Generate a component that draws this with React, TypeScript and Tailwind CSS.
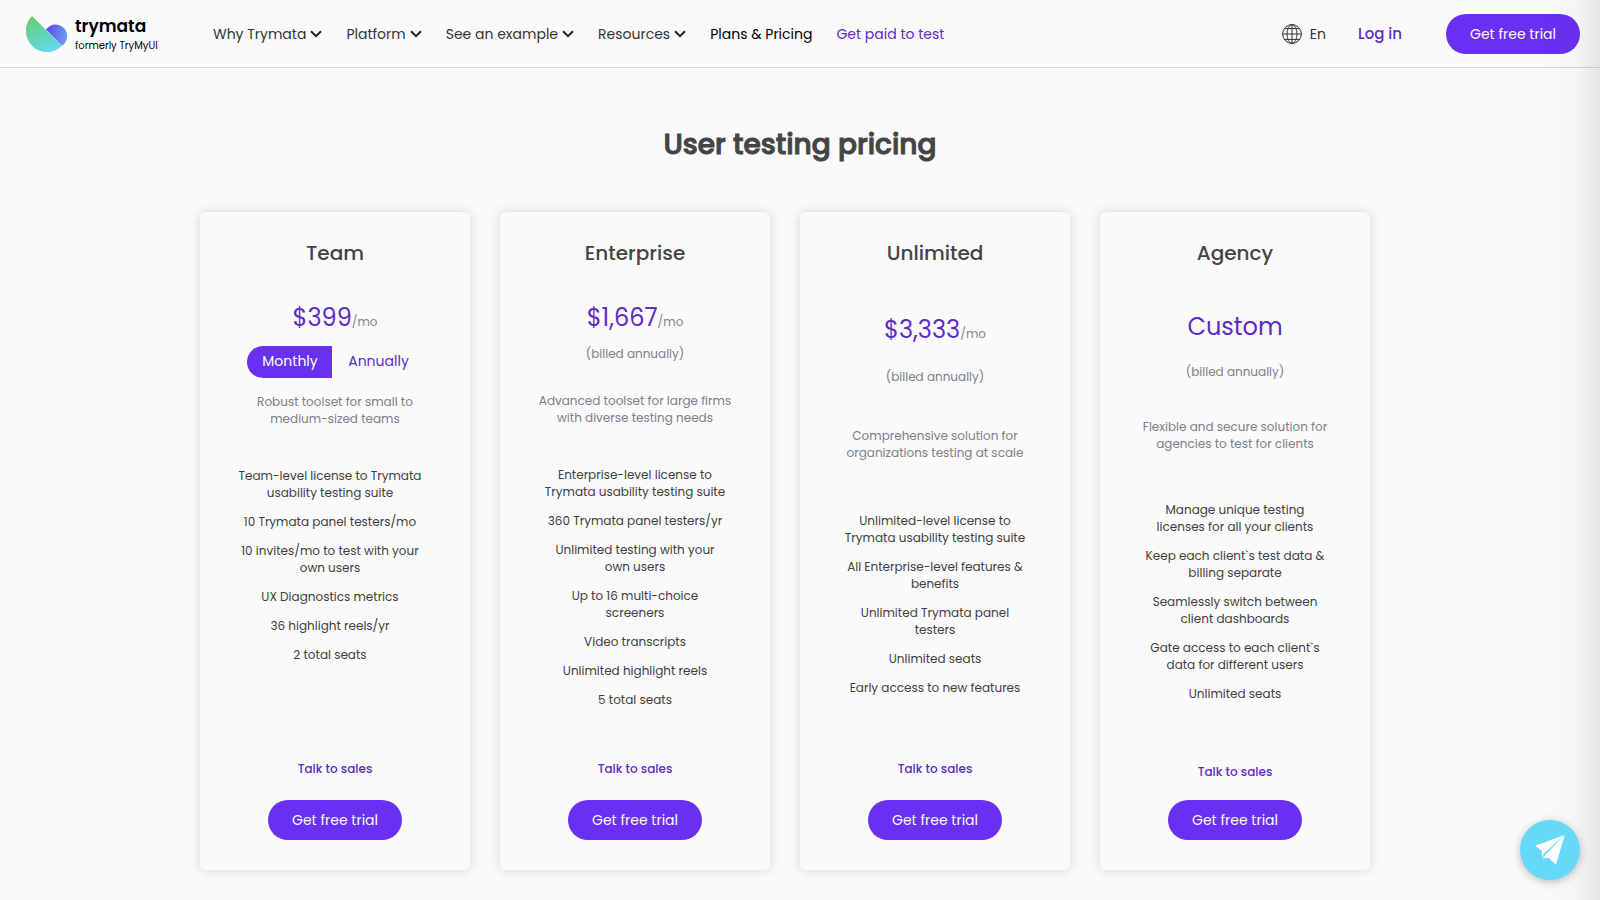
const navItems = [
  { label: "Why Trymata", menu: true, className: "text-[#333]" },
  { label: "Platform", menu: true, className: "text-[#333]" },
  { label: "See an example", menu: true, className: "text-[#333]" },
  { label: "Resources", menu: true, className: "text-[#333]" },
  { label: "Plans & Pricing", menu: false, className: "text-black" },
  { label: "Get paid to test", menu: false, className: "text-[#5f2bc4]" },
];

type Plan = {
  name: string;
  price: string;
  perMonth?: boolean;
  toggle?: boolean;
  summary: string[];
  features: string[][];
};

const plans: Plan[] = [
  {
    name: "Team",
    price: "$399",
    perMonth: true,
    toggle: true,
    summary: ["Robust toolset for small to", "medium-sized teams"],
    features: [
      ["Team-level license to Trymata", "usability testing suite"],
      ["10 Trymata panel testers/mo"],
      ["10 invites/mo to test with your", "own users"],
      ["UX Diagnostics metrics"],
      ["36 highlight reels/yr"],
      ["2 total seats"],
    ],
  },
  {
    name: "Enterprise",
    price: "$1,667",
    perMonth: true,
    summary: ["Advanced toolset for large firms", "with diverse testing needs"],
    features: [
      ["Enterprise-level license to", "Trymata usability testing suite"],
      ["360 Trymata panel testers/yr"],
      ["Unlimited testing with your", "own users"],
      ["Up to 16 multi-choice", "screeners"],
      ["Video transcripts"],
      ["Unlimited highlight reels"],
      ["5 total seats"],
    ],
  },
  {
    name: "Unlimited",
    price: "$3,333",
    perMonth: true,
    summary: ["Comprehensive solution for", "organizations testing at scale"],
    features: [
      ["Unlimited-level license to", "Trymata usability testing suite"],
      ["All Enterprise-level features &", "benefits"],
      ["Unlimited Trymata panel", "testers"],
      ["Unlimited seats"],
      ["Early access to new features"],
    ],
  },
  {
    name: "Agency",
    price: "Custom",
    summary: ["Flexible and secure solution for", "agencies to test for clients"],
    features: [
      ["Manage unique testing", "licenses for all your clients"],
      ["Keep each client`s test data &", "billing separate"],
      ["Seamlessly switch between", "client dashboards"],
      ["Gate access to each client`s", "data for different users"],
      ["Unlimited seats"],
    ],
  },
];

function Lines({ lines }: { lines: string[] }) {
  return (
    <>
      {lines.map((line) => (
        <span key={line} className="block whitespace-nowrap">{line}</span>
      ))}
    </>
  );
}

function TrialButton() {
  return (
    <button type="button" className="h-10 w-[134px] rounded-full bg-[#6a30f2] text-sm whitespace-nowrap text-[#fafafa]">
      Get free trial
    </button>
  );
}

function Logo() {
  return (
    <a href="#" className="flex w-[188px] shrink-0 items-center gap-2 text-black">
      <svg viewBox="0 0 42 38" className="h-[38px] w-[42px] shrink-0 overflow-visible" aria-hidden="true">
        <defs>
          <linearGradient id="leaf" x1="0.2" y1="0" x2="0.6" y2="1">
            <stop offset="0.1" stopColor="#64d07c" />
            <stop offset="1" stopColor="#62d8f0" />
          </linearGradient>
          <linearGradient id="petal" x1="0" y1="0.3" x2="1" y2="0.6">
            <stop offset="0" stopColor="#6048e6" />
            <stop offset="1" stopColor="#6d9cf8" />
          </linearGradient>
        </defs>
        <path d="M21 14.6 A11.6 11.6 0 1 1 37 30.8 Z" fill="url(#petal)" />
        <path d="M7 1 L37 30.8 A21.1 21.1 0 0 1 7 1 Z" fill="url(#leaf)" />
      </svg>
      <span className="flex flex-col pt-[5px]">
        <span className="text-[17px] leading-5 font-semibold">trymata</span>
        <span className="text-[10px] leading-5 whitespace-nowrap">formerly TryMyUI</span>
      </span>
    </a>
  );
}

function Chevron() {
  return (
    <svg viewBox="0 0 12 8" className="h-2 w-3" fill="none" stroke="#222" strokeWidth="2" aria-hidden="true">
      <path d="M1 1.2 L6 6.2 L11 1.2" />
    </svg>
  );
}

function GlobeIcon() {
  return (
    <svg viewBox="0 0 20 20" className="size-5" fill="none" stroke="#333" strokeWidth="1" aria-hidden="true">
      <circle cx="10" cy="10" r="9.4" />
      <ellipse cx="10" cy="10" rx="5" ry="9.4" />
      <path d="M10 0.6 V19.4 M0.6 10 H19.4 M2.6 4.6 H17.4 M2.6 15.4 H17.4" />
    </svg>
  );
}

function Header() {
  return (
    <header className="flex h-[68px] items-center border-b border-[#d5dbdb] pr-5 pl-[25px] text-sm">
      <Logo />
      <nav className="flex items-center gap-6">
        {navItems.map((item) => (
          <a key={item.label} href="#" className={`flex items-center gap-1 whitespace-nowrap ${item.className}`}>
            {item.label}
            {item.menu && <Chevron />}
          </a>
        ))}
      </nav>
      <div className="ml-auto flex items-center">
        <button type="button" className="mr-8 flex items-center gap-2 text-[#333]">
          <GlobeIcon />
          En
        </button>
        <a href="#" className="mr-11 text-[15px] font-medium text-[#5f2bc4]">Log in</a>
        <TrialButton />
      </div>
    </header>
  );
}

function PlanCard({ plan }: { plan: Plan }) {
  return (
    <article className="flex flex-col items-center justify-between gap-[7px] rounded-md bg-[#fafafa] px-5 pt-[26px] pb-[30px] text-center text-xs leading-[17px] shadow-[0_0_12px_rgba(0,0,0,0.15)]">
      <h2 className="pb-[23px] text-xl leading-[30px] font-medium text-[#444]">{plan.name}</h2>
      <p className="text-2xl leading-10 text-[#5f2bc4]">
        {plan.price}
        {plan.perMonth && <span className="text-xs text-[#888]">/mo</span>}
      </p>
      {plan.toggle ? (
        <div className="flex pt-px pb-2 text-sm">
          <button type="button" aria-pressed="true" className="h-8 w-[85px] rounded-l-full bg-[#6a30f2] pb-0.5 pl-0.5 text-[#fafafa]">
            Monthly
          </button>
          <button type="button" aria-pressed="false" className="h-8 w-[92px] rounded-r-full pb-0.5 pl-0.5 text-[#5f2bc4]">
            Annually
          </button>
        </div>
      ) : (
        <p className="pb-[23px] text-[#7d808a]">(billed annually)</p>
      )}
      <p className="pb-[33px] text-[#7d808a]">
        <Lines lines={plan.summary} />
      </p>
      <ul className={`flex flex-col gap-3 pb-[45px] text-[#3f3f3f] ${plan.toggle ? "grow pr-[10px]" : ""}`}>
        {plan.features.map((lines) => (
          <li key={lines[0]}>
            <Lines lines={lines} />
          </li>
        ))}
      </ul>
      <div className={`flex flex-col items-center ${plan.perMonth ? "gap-[23px]" : "gap-5"}`}>
        <a href="#" className="font-medium text-[#5f2bc4]">Talk to sales</a>
        <TrialButton />
      </div>
    </article>
  );
}

export default function App() {
  return (
    <div className="relative min-h-screen bg-[#fafafa] font-[Poppins,Inter,sans-serif]">
      <Header />
      <main className="mx-auto max-w-[1200px] pb-[30px]">
        <h1 className="pt-[55px] pb-[45px] text-center text-[28px] leading-[44px] font-medium text-[#444] [-webkit-text-stroke:1px_#444]">
          User testing pricing
        </h1>
        <div className="grid grid-cols-4 gap-[30px] pr-[30px]">
          {plans.map((plan) => (
            <PlanCard key={plan.name} plan={plan} />
          ))}
        </div>
      </main>

      <div className="pointer-events-none fixed inset-y-0 right-0 w-[60px] bg-linear-to-l from-black/8 via-black/2 via-40% to-transparent" />

      <button
        type="button"
        aria-label="Open chat"
        className="fixed right-5 bottom-5 flex size-[60px] items-center justify-center rounded-full bg-[#66d9f8] shadow-[0_2px_8px_rgba(0,0,0,0.25)]"
      >
        <svg viewBox="0 0 30 30" className="size-[30px]" fill="#fff" aria-hidden="true">
          <path d="M29.7 0 L0 10.7 L6.5 15.5 L7.6 23.2 L8.6 18.8 Z" />
          <path d="M29.7 0 L10 20.2 L7.6 24 L13.2 22.6 L21 29.7 Z" />
        </svg>
      </button>
    </div>
  );
}
